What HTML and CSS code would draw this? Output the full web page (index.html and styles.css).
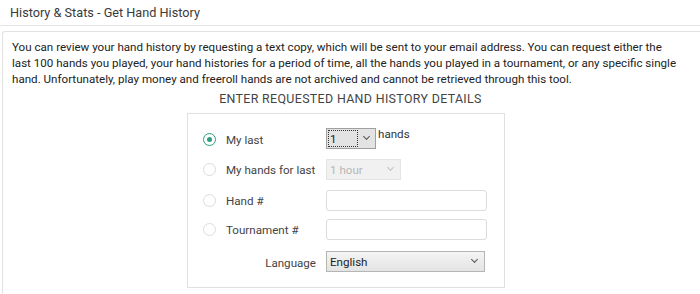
FILE: index.html
```html
<!DOCTYPE html>
<html>
<head>
    <title>History &amp; Stats - Get Hand History</title>
    <link rel="stylesheet" href="styles.css">
</head>
<body>
    <div class="page-title">History &amp; Stats - Get Hand History</div>

    <div class="panel">
        <p class="intro">You can review your hand history by requesting a text copy, which will be sent to your email address. You can request either the last 100 hands you played, your hand histories for a period of time, all the hands you played in a tournament, or any specific single hand. Unfortunately, play money and freeroll hands are not archived and cannot be retrieved through this tool.</p>

        <div class="section-title">ENTER REQUESTED HAND HISTORY DETAILS</div>

        <!-- Request form -->
        <form class="request-box" id="historyForm">
            <div class="row">
                <label class="choice">
                    <input type="radio" name="mode" value="last" checked>
                    <span class="dot"></span>
                    My last
                </label>
                <div class="field">
                    <span class="select-wrap focus small">
                        <select id="lastCount">
                            <option>1</option>
                            <option>5</option>
                            <option>10</option>
                            <option>50</option>
                            <option>100</option>
                        </select>
                    </span>
                    <span class="suffix">hands</span>
                </div>
            </div>
            <div class="row">
                <label class="choice">
                    <input type="radio" name="mode" value="period">
                    <span class="dot"></span>
                    My hands for last
                </label>
                <div class="field">
                    <span class="select-wrap disabled medium">
                        <select id="period" disabled>
                            <option>1 hour</option>
                            <option>1 day</option>
                        </select>
                    </span>
                </div>
            </div>
            <div class="row">
                <label class="choice">
                    <input type="radio" name="mode" value="hand">
                    <span class="dot"></span>
                    Hand #
                </label>
                <div class="field">
                    <input type="text" class="text-input" id="handNo">
                </div>
            </div>
            <div class="row">
                <label class="choice">
                    <input type="radio" name="mode" value="tournament">
                    <span class="dot"></span>
                    Tournament #
                </label>
                <div class="field">
                    <input type="text" class="text-input" id="tournamentNo">
                </div>
            </div>
            <div class="row">
                <div class="plain-label">Language</div>
                <div class="field">
                    <span class="select-wrap wide">
                        <select id="language">
                            <option>English</option>
                            <option>Deutsch</option>
                            <option>Français</option>
                        </select>
                    </span>
                </div>
            </div>
        </form>
    </div>
</body>
</html>
```

FILE: styles.css
```css
html, body {
    margin: 0;
    padding: 0;
    overflow: hidden;
}
body {
    font-family: Roboto, "Liberation Sans", Arial, sans-serif;
    font-size: 11.6px;
    color: #333;
    background: #fff;
}
.page-title {
    height: 26px;
    line-height: 26px;
    padding-left: 10px;
    font-size: 12.7px;
    color: #3a3a3a;
    border-bottom: 1px solid #e4e4e4;
    box-sizing: border-box;
    margin-bottom: 5px;
}
.panel {
    margin-left: 2px;
    border: 1px solid #e2e2e2;
    border-right: none;
    border-bottom: none;
    border-top-left-radius: 3px;
    padding: 7px 21px 0 9px;
    height: 300px;
}
.intro {
    margin: 0;
    line-height: 16px;
    color: #222;
}
.section-title {
    margin-top: 4px;
    line-height: 16px;
    text-align: center;
    font-size: 12.4px;
    letter-spacing: 0.35px;
    color: #444;
    padding-left: 10px;
}
.request-box {
    width: 316px;
    margin: 6px 0 0 175px;
    border: 1px solid #e0e0e0;
    padding: 14px 0 15px;
}
.row {
    display: flex;
    align-items: center;
    height: 21px;
    margin-top: 10px;
}
.row:first-child {
    margin-top: 0;
}
.row:nth-child(4) {
    margin-top: 8px;
}
.row:last-child {
    margin-top: 11px;
}
.choice {
    width: 123px;
    padding-left: 15px;
    display: flex;
    align-items: center;
    color: #444;
    cursor: pointer;
}
.row:first-child .choice {
    margin-top: 2px;
}
.choice input {
    display: none;
}
.dot {
    width: 11px;
    height: 11px;
    border: 1px solid #dcdcdc;
    border-radius: 50%;
    margin-right: 10px;
    position: relative;
    flex: none;
}
.choice input:checked + .dot {
    border-color: #2a9f84;
}
.choice input:checked + .dot::after {
    content: "";
    position: absolute;
    left: 3px;
    top: 3px;
    width: 5px;
    height: 5px;
    border-radius: 50%;
    background: #2a9f84;
}
.plain-label {
    width: 128px;
    padding-right: 10px;
    text-align: right;
    color: #444;
    margin-top: 2px;
}
.field {
    display: flex;
    align-items: flex-start;
}
.suffix {
    margin-left: 2px;
    margin-top: -1px;
    color: #333;
}
.select-wrap {
    position: relative;
    display: inline-block;
}
.select-wrap select {
    -webkit-appearance: none;
    appearance: none;
    font-family: Roboto, "Liberation Sans", Arial, sans-serif;
    font-size: 11.6px;
    height: 21px;
    padding: 0 0 0 3px;
    margin: 0;
    border: 1px solid #b5b5b5;
    background: linear-gradient(#f4f4f4, #e4e4e4);
    color: #222;
    width: 100%;
    box-sizing: border-box;
    outline: none;
}
.select-wrap::after {
    content: "";
    position: absolute;
    right: 8px;
    top: 6px;
    width: 4px;
    height: 4px;
    border-right: 1.5px solid #555;
    border-bottom: 1.5px solid #555;
    transform: rotate(45deg);
    pointer-events: none;
}
.small {
    width: 50px;
}
.small::after {
    right: 7px;
}
.small select {
    border-color: #a0a0a0;
    background: #e3e3e3;
}
.focus::before {
    content: "";
    position: absolute;
    left: 2px;
    top: 2px;
    width: 28px;
    height: 15px;
    border: 1px dotted #333;
    pointer-events: none;
}
.medium {
    width: 75px;
}
.disabled select {
    background: #ececec;
    border-color: #dadada;
    color: #999;
}
.disabled::after {
    border-color: #c2c2c2;
}
.wide {
    width: 159px;
}
.text-input {
    width: 161px;
    height: 21px;
    box-sizing: border-box;
    border: 1px solid #dcdcdc;
    border-radius: 3px;
    margin: 0;
    padding: 0 4px;
    font-family: Roboto, "Liberation Sans", Arial, sans-serif;
    font-size: 11.6px;
}
```
